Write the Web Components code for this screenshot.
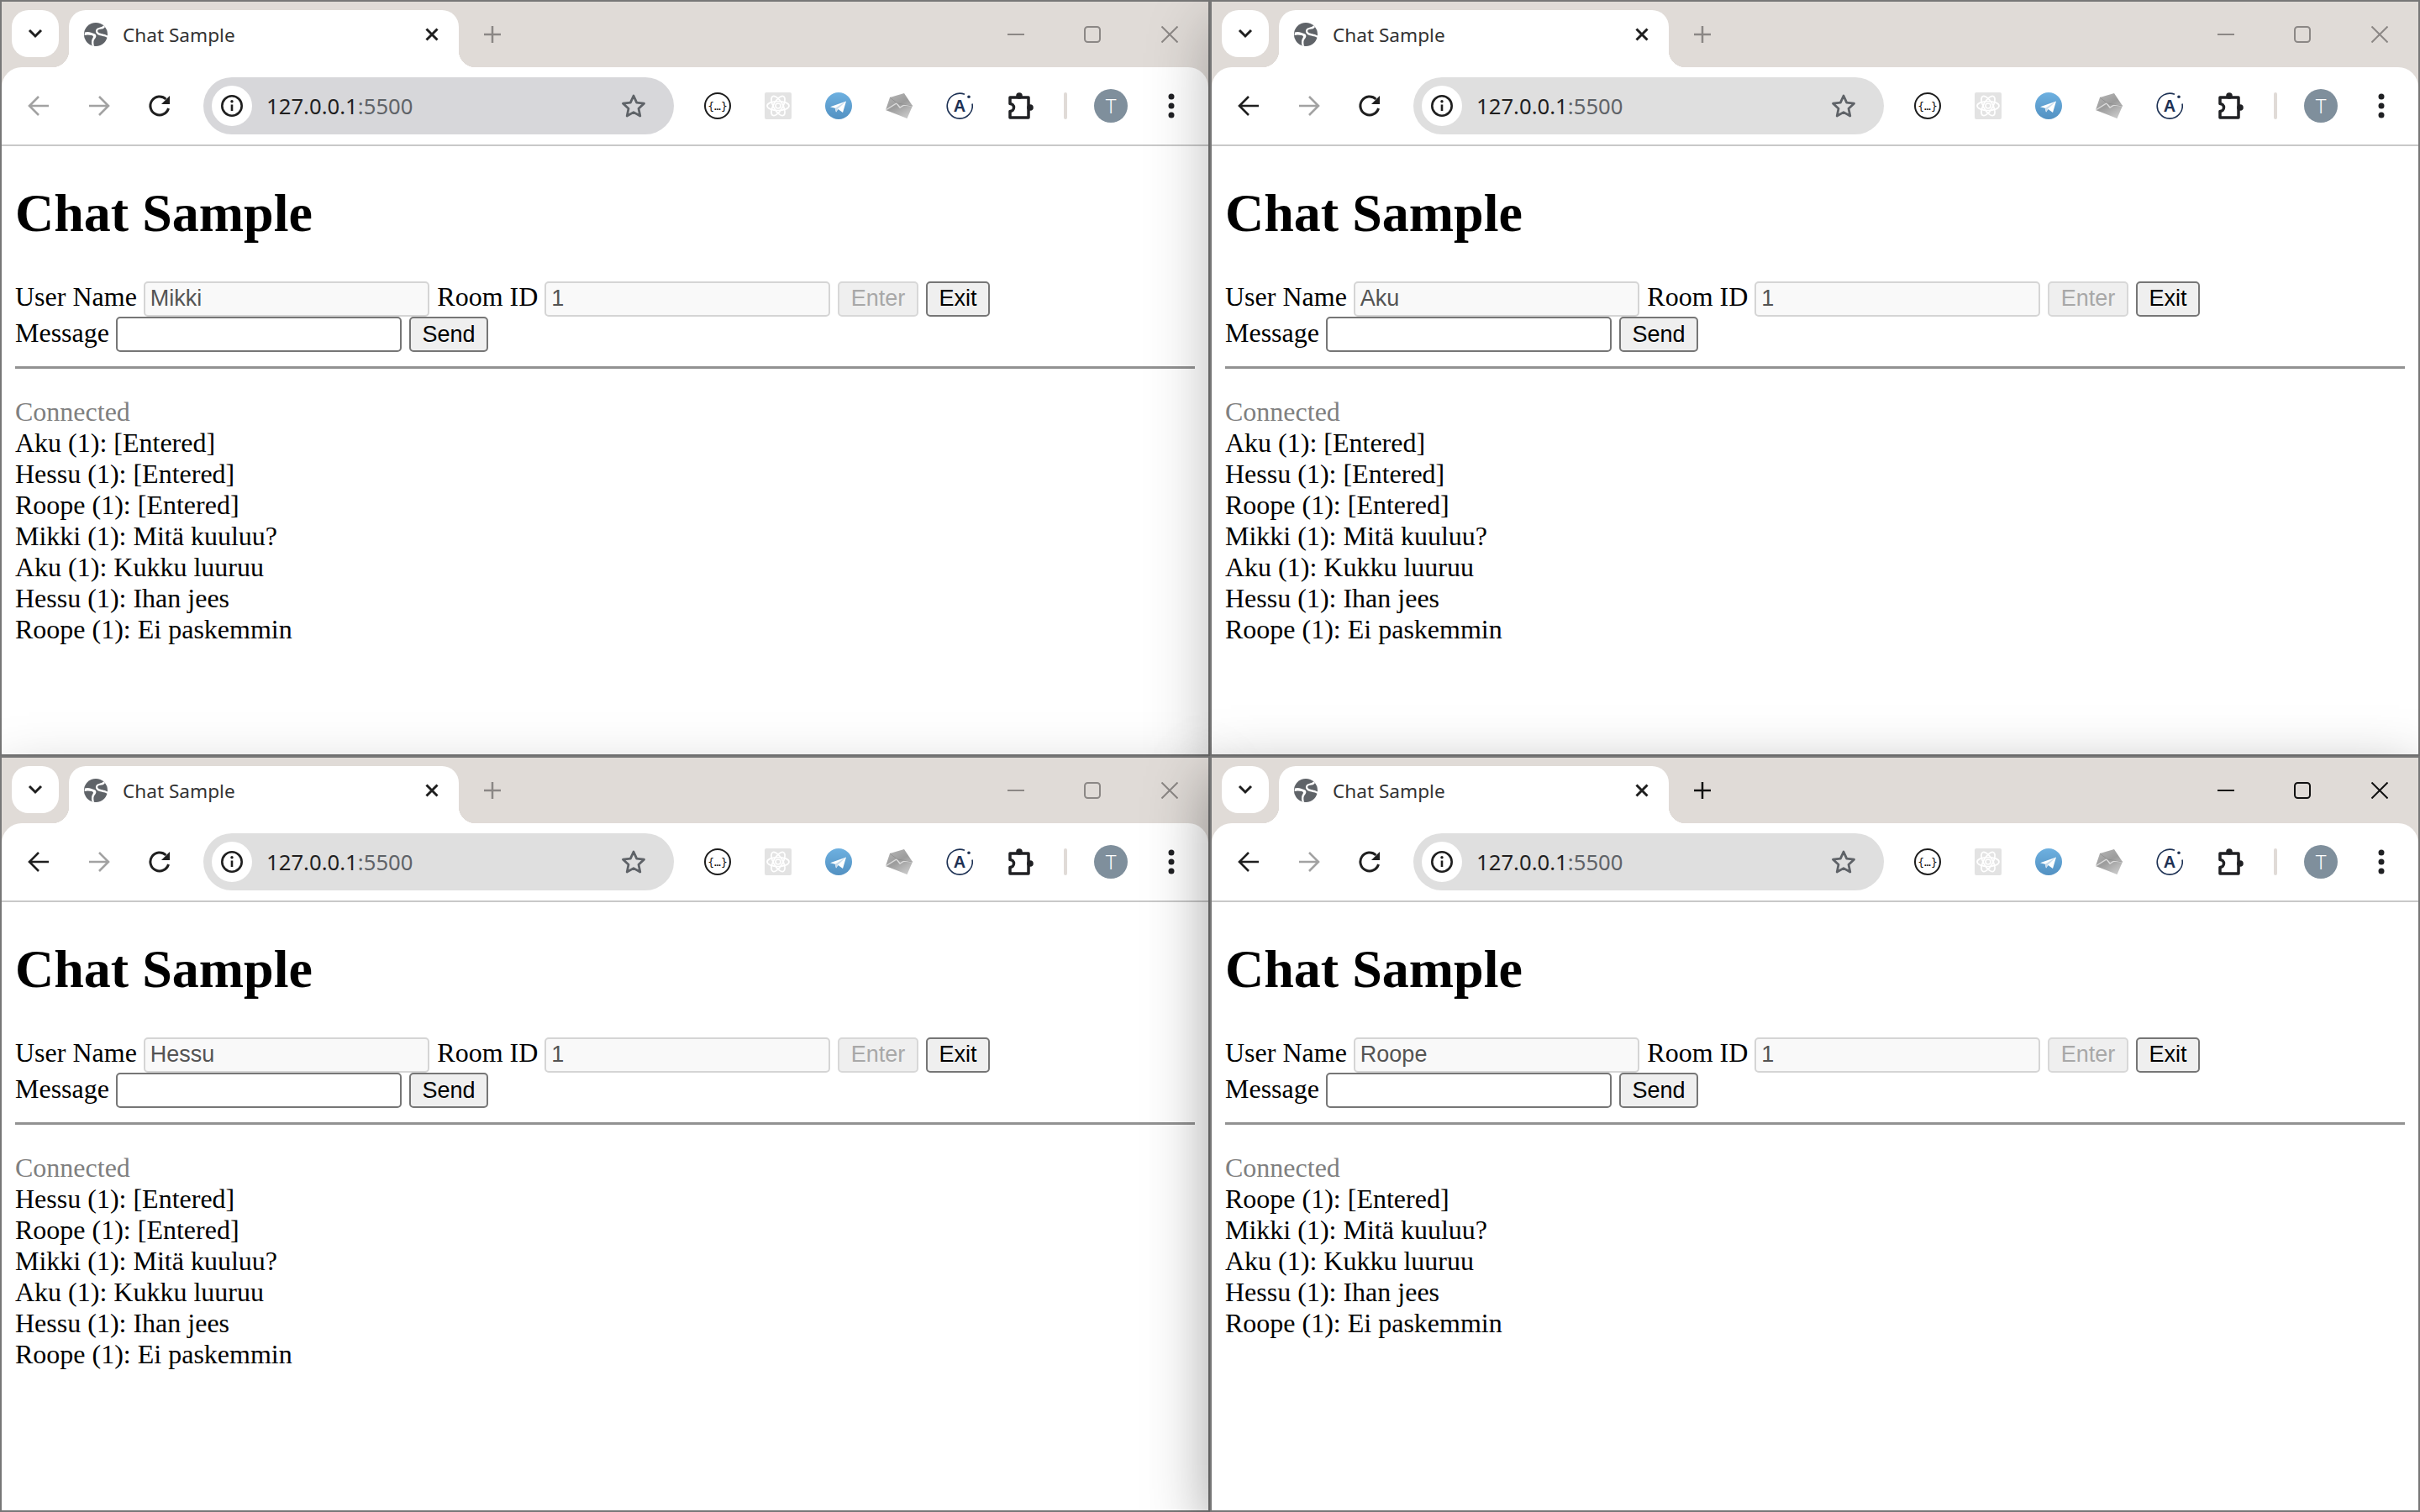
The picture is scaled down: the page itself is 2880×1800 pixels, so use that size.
<!DOCTYPE html>
<html lang="en">
<head>
<meta charset="utf-8">
<title>Chat Sample</title>
<style>
  html, body { margin: 0; padding: 0; background: #fff; overflow: hidden; }
  body { font-family: "Liberation Serif", serif; }
</style>
</head>
<body>
<chat-desktop>
  <browser-window>
    <chat-page user="Mikki">
      <chat-line>Aku (1): [Entered]</chat-line>
      <chat-line>Hessu (1): [Entered]</chat-line>
      <chat-line>Roope (1): [Entered]</chat-line>
      <chat-line>Mikki (1): Mitä kuuluu?</chat-line>
      <chat-line>Aku (1): Kukku luuruu</chat-line>
      <chat-line>Hessu (1): Ihan jees</chat-line>
      <chat-line>Roope (1): Ei paskemmin</chat-line>
    </chat-page>
  </browser-window>
  <browser-window can-go-back>
    <chat-page user="Aku">
      <chat-line>Aku (1): [Entered]</chat-line>
      <chat-line>Hessu (1): [Entered]</chat-line>
      <chat-line>Roope (1): [Entered]</chat-line>
      <chat-line>Mikki (1): Mitä kuuluu?</chat-line>
      <chat-line>Aku (1): Kukku luuruu</chat-line>
      <chat-line>Hessu (1): Ihan jees</chat-line>
      <chat-line>Roope (1): Ei paskemmin</chat-line>
    </chat-page>
  </browser-window>
  <browser-window can-go-back>
    <chat-page user="Hessu">
      <chat-line>Hessu (1): [Entered]</chat-line>
      <chat-line>Roope (1): [Entered]</chat-line>
      <chat-line>Mikki (1): Mitä kuuluu?</chat-line>
      <chat-line>Aku (1): Kukku luuruu</chat-line>
      <chat-line>Hessu (1): Ihan jees</chat-line>
      <chat-line>Roope (1): Ei paskemmin</chat-line>
    </chat-page>
  </browser-window>
  <browser-window can-go-back active>
    <chat-page user="Roope">
      <chat-line>Roope (1): [Entered]</chat-line>
      <chat-line>Mikki (1): Mitä kuuluu?</chat-line>
      <chat-line>Aku (1): Kukku luuruu</chat-line>
      <chat-line>Hessu (1): Ihan jees</chat-line>
      <chat-line>Roope (1): Ei paskemmin</chat-line>
    </chat-page>
  </browser-window>
</chat-desktop>

<script>
const ICONS = {
  chevron: `<svg width="20" height="14" viewBox="0 0 20 14"><path d="M3 3l7 7 7-7" fill="none" stroke="#1f1f1f" stroke-width="3"/></svg>`,
  globe: `<svg width="28" height="28" viewBox="0 0 28 28"><circle cx="14" cy="14" r="14" fill="#5f6368"/><path d="M1 11.500C5 10 9 12 12 13c3 1 3 4 1 6-2 2-2 5-1 9l-2.500-.5c-1-4.500-.5-7.500 1-9.500 1-1.500.5-2.500-1.500-3-3-.5-5-1-8.500 0z" fill="#fff"/><path d="M25 5c-2 3-5 2.500-7 3-2 .5-2.500 2-1 3.500 2 2 7 1.500 11 4l0 2.500c-4-2.500-8-2-11-3.500-2.500-1.500-4-4-2.500-6.500C16 5.500 21 6 23 3.500z" fill="#fff"/></svg>`,
  close: `<svg width="20" height="20" viewBox="0 0 20 20"><path d="M3.500 3.500l13 13M16.500 3.500l-13 13" stroke="#1f1f1f" stroke-width="3"/></svg>`,
  plus: `<svg width="22" height="22" viewBox="0 0 22 22"><path d="M11 1v20M1 11h20" stroke="currentColor" stroke-width="2.500"/></svg>`,
  min: `<svg width="20" height="20" viewBox="0 0 20 20"><path d="M0 10h20" stroke="currentColor" stroke-width="2"/></svg>`,
  max: `<svg width="20" height="20" viewBox="0 0 20 20"><rect x="1" y="1" width="18" height="18" rx="3.500" fill="none" stroke="currentColor" stroke-width="2"/></svg>`,
  x: `<svg width="20" height="20" viewBox="0 0 20 20"><path d="M.5 .5l19 19M19.500 .5l-19 19" stroke="currentColor" stroke-width="2"/></svg>`,
  back: `<svg width="26" height="26" viewBox="0 0 26 26"><path d="M25 13H2M13 2L2 13l11 11" fill="none" stroke="currentColor" stroke-width="2.600"/></svg>`,
  forward: `<svg width="26" height="26" viewBox="0 0 26 26"><path d="M1 13h23M13 2l11 11-11 11" fill="none" stroke="currentColor" stroke-width="2.600"/></svg>`,
  reload: `<svg width="32" height="32" viewBox="0 0 32 32"><path d="M26.500 19A11 11 0 1 1 23.500 8" fill="none" stroke="#1f1f1f" stroke-width="3"/><path d="M28 4v10h-10z" fill="#1f1f1f"/></svg>`,
  info: `<svg width="28" height="28" viewBox="0 0 28 28"><circle cx="14" cy="14" r="11.700" fill="none" stroke="#1f1f1f" stroke-width="2.600"/><path d="M14 12.500V20" stroke="#1f1f1f" stroke-width="2.600"/><circle cx="14" cy="8.800" r="1.700" fill="#1f1f1f"/></svg>`,
  star: `<svg width="32" height="32" viewBox="0 0 32 32"><path d="M16 4l3.700 8.200 8.800 1-6.500 6 1.800 8.800L16 23.600 8.200 28l1.800-8.800-6.500-6 8.800-1z" fill="none" stroke="#5f6368" stroke-width="2.800" stroke-linejoin="round"/></svg>`,
  json: `<svg width="32" height="32" viewBox="0 0 32 32"><circle cx="16" cy="16" r="15" fill="#fff" stroke="#1c1c1c" stroke-width="2"/><text x="16" y="20.500" text-anchor="middle" font-family="DejaVu Sans Mono, monospace" font-size="13" fill="#111">{…}</text></svg>`,
  react: `<svg width="32" height="32" viewBox="0 0 32 32"><rect width="32" height="32" rx="2" fill="#e3e3e3"/><g fill="none" stroke="#fff" stroke-width="1.700"><ellipse cx="16" cy="16" rx="13" ry="5.500"/><ellipse cx="16" cy="16" rx="13" ry="5.500" transform="rotate(60 16 16)"/><ellipse cx="16" cy="16" rx="13" ry="5.500" transform="rotate(120 16 16)"/><circle cx="16" cy="16" r="3"/></g></svg>`,
  telegram: `<svg width="32" height="32" viewBox="0 0 32 32"><defs><linearGradient id="tg" x1="0" y1="0" x2="0" y2="1"><stop offset="0" stop-color="#6db0e0"/><stop offset="1" stop-color="#5391c2"/></linearGradient></defs><circle cx="16" cy="16" r="16" fill="url(#tg)"/><path d="M6 17.300L25 10.500 21 24l-5.500-4-2.500 3.500-1.200-4.800z" fill="#fff"/><path d="M11.800 18.700L25 10.500 15 19.700l-2 3.800z" fill="#c9dcec"/></svg>`,
  mail: `<svg width="32" height="32" viewBox="0 0 32 32"><defs><linearGradient id="ml" x1="0" y1="0" x2=".6" y2="1"><stop offset="0" stop-color="#b9b9b9"/><stop offset=".55" stop-color="#9c9c9c"/><stop offset="1" stop-color="#c4c4c4"/></linearGradient></defs><path d="M5 6L22 1l10 15-6.500 15L0 21z" fill="url(#ml)"/><path d="M0 21L13 13l4 5 5-3 10 1" fill="none" stroke="#dcdcdc" stroke-width="1.400"/><path d="M5 6l9 7 18 3" fill="none" stroke="#8e8e8e" stroke-width=".8"/></svg>`,
  arc: `<svg width="32" height="32" viewBox="0 0 32 32"><path d="M31 13.500A15 15 0 1 1 22 2.300" fill="none" stroke="#1d3154" stroke-width="1.600"/><circle cx="27" cy="5.300" r="1.800" fill="#1d3154"/><text x="16" y="23" text-anchor="middle" font-family="Liberation Sans, sans-serif" font-size="20" font-weight="700" fill="#1d3154">A</text></svg>`,
  puzzle: `<svg width="32" height="34" viewBox="0 0 32 34"><path d="M4 7h22v24H4v-7.500a4.500 4.500 0 0 0 0-9z" fill="none" stroke="#202124" stroke-width="3.500" stroke-linejoin="round"/><circle cx="15" cy="5" r="3.800" fill="#202124"/><circle cx="28" cy="19" r="3.800" fill="#202124"/></svg>`,
  dots: `<svg width="8" height="32" viewBox="0 0 8 32"><circle cx="4" cy="5" r="3.500" fill="#202124"/><circle cx="4" cy="16" r="3.500" fill="#202124"/><circle cx="4" cy="27" r="3.500" fill="#202124"/></svg>`
};

class ChatDesktop extends HTMLElement {
  constructor() {
    super();
    this.attachShadow({ mode: "open" });
    this.shadowRoot.innerHTML = `
      <style>
        :host { display: grid; grid-template-columns: 1440px 1440px; grid-template-rows: 900px 900px; width: 2880px; height: 1800px; }
      </style>
      <slot></slot>`;
  }
}

class BrowserWindow extends HTMLElement {
  constructor() {
    super();
    this.attachShadow({ mode: "open" });
    this.shadowRoot.innerHTML = `
      <style>
        :host { display: flex; flex-direction: column; box-sizing: border-box; width: 1440px; height: 900px; border: 2px solid #777; background: #fff; position: relative; box-shadow: 0 28px 70px rgba(0, 0, 0, .28); }
        :host([active]) { box-shadow: 0 24px 70px rgba(0, 0, 0, .38); }
        .chrome { background: #e0dbd7; flex: none; }
        .clip { flex: 1; min-height: 0; overflow: hidden; }
      </style>
      <div class="chrome">
        <browser-tabstrip></browser-tabstrip>
        <browser-toolbar></browser-toolbar>
      </div>
      <div class="clip"><slot></slot></div>`;
  }

  connectedCallback() {
    const active = this.hasAttribute("active");
    const back = this.hasAttribute("can-go-back");
    const strip = this.shadowRoot.querySelector("browser-tabstrip");
    const bar = this.shadowRoot.querySelector("browser-toolbar");
    strip.toggleAttribute("active", active);
    bar.toggleAttribute("can-go-back", back);
    // first window still has the darker omnibox
    bar.toggleAttribute("dim", !back);
    // later windows sit on top and drop their shadow on earlier ones
    this.style.zIndex = [...this.parentNode.children].indexOf(this) + 1;
  }
}

class BrowserTabstrip extends HTMLElement {
  constructor() {
    super();
    this.attachShadow({ mode: "open" });
    this.shadowRoot.innerHTML = `
      <style>
        :host { display: flex; height: 78px; box-sizing: border-box; padding: 10px 0 0 12px; color: #8b8785; font-family: "Noto Sans", sans-serif; }
        :host([active]) { color: #111; }
        .list { width: 56px; height: 56px; border-radius: 20px; background: #fff; display: flex; align-items: center; justify-content: center; flex: none; }
        .tab { position: relative; width: 464px; height: 68px; margin-left: 12px; box-sizing: border-box; padding: 0 22px 10px 18px; background: #fff; border-radius: 20px 20px 0 0; display: flex; align-items: center; flex: none; color: #333; font-size: 22.6px; }
        .tab::before, .tab::after { content: ""; position: absolute; bottom: 0; width: 20px; height: 20px; }
        .tab::before { left: -20px; background: radial-gradient(circle at 0 0, transparent 20px, #fff 20.5px); }
        .tab::after { right: -20px; background: radial-gradient(circle at 100% 0, transparent 20px, #fff 20.5px); }
        .title { margin-left: 18px; flex: 1; }
        .plus { display: flex; margin: 18px 0 0 29px; height: 22px; }
        .controls { margin-left: auto; display: flex; height: 58px; align-items: center; }
        .controls span { width: 92px; display: flex; justify-content: center; }
        .controls span:first-child { padding-left: 2px; box-sizing: border-box; }
        svg { display: block; }
      </style>
      <div class="list">${ICONS.chevron}</div>
      <div class="tab">${ICONS.globe}<span class="title">Chat Sample</span>${ICONS.close}</div>
      <div class="plus">${ICONS.plus}</div>
      <div class="controls"><span>${ICONS.min}</span><span>${ICONS.max}</span><span>${ICONS.x}</span></div>`;
  }
}

class BrowserToolbar extends HTMLElement {
  constructor() {
    super();
    this.attachShadow({ mode: "open" });
    this.shadowRoot.innerHTML = `
      <style>
        :host { display: flex; align-items: center; height: 94px; box-sizing: border-box; padding: 0 0 0 8px; background: #fff; border-bottom: 2px solid #c9c9c9; border-radius: 24px 24px 0 0; font-family: "Noto Sans", sans-serif; }
        .btn { width: 72px; display: flex; justify-content: center; align-items: center; flex: none; }
        #back { color: #a2a2a2; }
        :host([can-go-back]) #back { color: #1f1f1f; }
        #forward { color: #a2a2a2; }
        .omni { display: flex; align-items: center; width: 560px; height: 68px; box-sizing: border-box; margin: 0 16px; padding: 0 32px 0 10px; border-radius: 34px; background: #dfdfdf; flex: none; }
        :host([dim]) .omni { background: #d7d7da; }
        .info { width: 48px; height: 48px; border-radius: 50%; background: #fff; display: flex; align-items: center; justify-content: center; }
        .url { margin-left: 17px; flex: 1; font-size: 25.7px; color: #1f1f1f; }
        .url span { color: #5f6368; }
        .sep { width: 4px; height: 32px; border-radius: 2px; background: #e0dbd7; margin-left: 16px; flex: none; }
        .avatar-box { margin-left: 16px; }
        .avatar { width: 40px; height: 40px; border-radius: 50%; background: #7f8f9c; color: #fff; font-size: 24px; font-weight: 300; display: flex; align-items: center; justify-content: center; line-height: 1; }
        svg { display: block; }
      </style>
      <div class="btn" id="back">${ICONS.back}</div>
      <div class="btn" id="forward">${ICONS.forward}</div>
      <div class="btn">${ICONS.reload}</div>
      <div class="omni">
        <div class="info">${ICONS.info}</div>
        <div class="url">127.0.0.1<span>:5500</span></div>
        ${ICONS.star}
      </div>
      <div class="btn">${ICONS.json}</div>
      <div class="btn">${ICONS.react}</div>
      <div class="btn">${ICONS.telegram}</div>
      <div class="btn">${ICONS.mail}</div>
      <div class="btn">${ICONS.arc}</div>
      <div class="btn">${ICONS.puzzle}</div>
      <div class="sep"></div>
      <div class="btn avatar-box"><div class="avatar">T</div></div>
      <div class="btn">${ICONS.dots}</div>`;
  }
}

class TextField extends HTMLElement {
  constructor() {
    super();
    this.attachShadow({ mode: "open" });
    this.shadowRoot.innerHTML = `
      <style>
        :host { display: flex; align-items: center; box-sizing: border-box; width: 340px; height: 42px; padding: 0 6px; flex: none; border: 2px solid #767676; border-radius: 5px; background: #fff; font: 27px "Liberation Sans", sans-serif; color: #000; }
        :host([disabled]) { border-color: #d5d5d5; background: #f9f9f9; color: #545454; }
      </style>
      <slot></slot>`;
  }
}

class FormButton extends HTMLElement {
  constructor() {
    super();
    this.attachShadow({ mode: "open" });
    this.shadowRoot.innerHTML = `
      <style>
        :host { display: flex; align-items: center; box-sizing: border-box; height: 42px; padding: 0 13.500px; flex: none; border: 2px solid #767676; border-radius: 5px; background: #efefef; font: 27px "Liberation Sans", sans-serif; color: #000; }
        :host([disabled]) { border-color: #d8d8d8; color: #a8a8a8; }
      </style>
      <slot></slot>`;
  }
}

class ChatLine extends HTMLElement {
  constructor() {
    super();
    this.attachShadow({ mode: "open" });
    this.shadowRoot.innerHTML = `
      <style>:host { display: block; }</style>
      <slot></slot>`;
  }
}

class ChatPage extends HTMLElement {
  constructor() {
    super();
    this.attachShadow({ mode: "open" });
    this.shadowRoot.innerHTML = `
      <style>
        :host { display: block; padding: 0 16px; color: #000; font: 32px/36.8px "Liberation Serif", serif; }
        h1 { margin: 43px 0; font-size: 64px; line-height: 74px; font-weight: 700; }
        .row { display: flex; align-items: center; gap: 8px; height: 43px; }
        .row + .row { height: 42px; }
        .label { padding-bottom: 4px; }
        .room { margin-left: 1.500px; }
        .row form-button { margin-left: 1px; }
        hr { height: 0; margin: 17px 0 0; border: 0; border-top: 3px solid #929292; }
        .log { margin-top: 33px; line-height: 37px; }
        .status { color: #808080; }
      </style>
      <h1>Chat Sample</h1>
      <div class="row">
        <span class="label">User Name</span>
        <text-field disabled id="user"></text-field>
        <span class="label room">Room ID</span>
        <text-field disabled>1</text-field>
        <form-button disabled>Enter</form-button>
        <form-button>Exit</form-button>
      </div>
      <div class="row">
        <span class="label">Message</span>
        <text-field></text-field>
        <form-button>Send</form-button>
      </div>
      <hr>
      <div class="log">
        <div class="status">Connected</div>
        <slot></slot>
      </div>`;
  }

  connectedCallback() {
    this.shadowRoot.getElementById("user").textContent = this.getAttribute("user");
  }
}

// Register custom elements
customElements.define("chat-desktop", ChatDesktop);
customElements.define("browser-tabstrip", BrowserTabstrip);
customElements.define("browser-toolbar", BrowserToolbar);
customElements.define("browser-window", BrowserWindow);
customElements.define("text-field", TextField);
customElements.define("form-button", FormButton);
customElements.define("chat-line", ChatLine);
customElements.define("chat-page", ChatPage);
</script>
</body>
</html>
